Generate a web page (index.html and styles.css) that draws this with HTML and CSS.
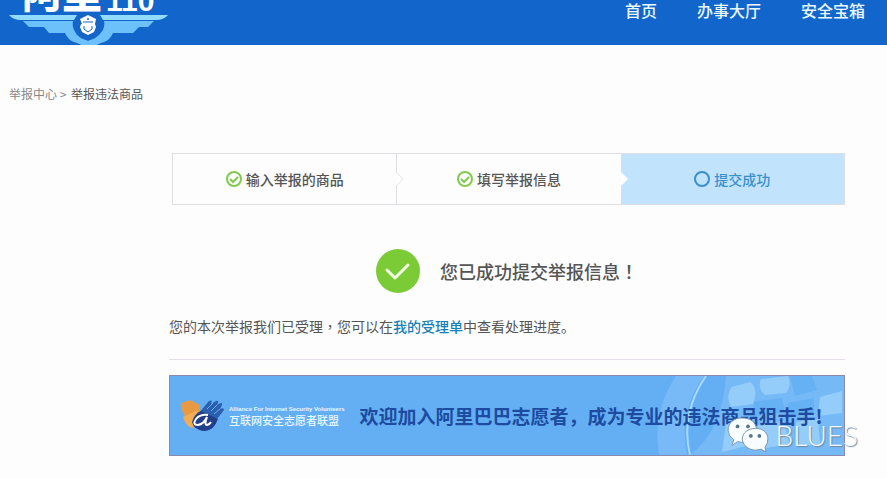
FILE: index.html
```html
<!DOCTYPE html>
<html lang="zh-CN">
<head>
    <meta charset="utf-8" />
    <title>举报违法商品</title>
    <link rel="stylesheet" href="styles.css">
</head>
<body>
    <header class="header">
        <a href="#" class="logo">
            <span class="logo-text">阿里<b>110</b></span>
            <svg class="logo-wings" viewBox="0 0 160 30" width="160" height="30">
                <path fill="#8fdcff" d="M0 0h68l-3 5H12Q4 5 0 0zM159 0H91l3 5h53q8 0 12-5z"/>
                <path fill="#6cc1fb" d="M14 6h50q-1 5 1 9l3 5 11 6 11-6 4-5q2-5 1-9h50l-6 6h-9l-6 6h-20q-3 7-9 9-8 2-15 9-7-7-15-9-6-2-9-9H40l-5-6H20z"/>
                <circle cx="79" cy="12" r="13" fill="#1464ca"/>
                <path fill="#fff" d="M71 4l8-4 8 4-1 5H73z"/>
                <path fill="#fff" d="M72 9h14l1 3-2 5-6 3-6-3-2-5z"/>
                <path d="M74 7h10M75 11v3l4 3 4-3v-3" fill="none" stroke="#1464ca"/>
                <circle cx="79" cy="4" r="1" fill="#1464ca"/>
            </svg>
        </a>
        <nav class="nav">
            <a href="#">首页</a>
            <a href="#">办事大厅</a>
            <a href="#">安全宝箱</a>
        </nav>
    </header>

    <div class="breadcrumb"><a href="#">举报中心</a> &gt; <span>举报违法商品</span></div>

    <main class="content">
        <ol class="steps">
            <li class="step">
                <svg viewBox="0 0 16 16" width="16" height="16" fill="none" stroke="#83c94f" stroke-width="2"><circle cx="8" cy="8" r="7"/><path d="M4 8l3 3 5-5"/></svg>
                输入举报的商品
                <svg class="arrow" viewBox="0 0 8 16" width="8" height="16"><path fill="#fff" stroke="#e3e3e8" d="M0 1l7 7-7 7"/></svg>
            </li>
            <li class="step">
                <svg viewBox="0 0 16 16" width="16" height="16" fill="none" stroke="#83c94f" stroke-width="2"><circle cx="8" cy="8" r="7"/><path d="M4 8l3 3 5-5"/></svg>
                填写举报信息
                <svg class="arrow" viewBox="0 0 8 16" width="8" height="16"><path fill="#fff" d="M0 1l7 7-7 7"/></svg>
            </li>
            <li class="step active">
                <svg viewBox="0 0 16 16" width="16" height="16" fill="none" stroke="#3990cd" stroke-width="2"><circle cx="8" cy="8" r="7"/></svg>
                提交成功
            </li>
        </ol>

        <div class="result">
            <svg viewBox="0 0 44 44" width="44" height="44"><circle cx="22" cy="22" r="22" fill="#7acb36"/><path d="M11 21l8 8 13-13" fill="none" stroke="#f3ffe5" stroke-width="3" stroke-linecap="round" stroke-linejoin="round"/></svg>
            <h1>您已成功提交举报信息<span class="mark" lang="zh-TW">！</span></h1>
        </div>
        <p class="message">您的本次举报我们已受理<span class="mark" lang="zh-TW">，</span>您可以在<a href="#">我的受理单</a>中查看处理进度。</p>

        <div class="banner">
            <svg class="banner-bg" viewBox="0 0 190 79" width="190" height="79">
                <path fill="#8bc6fa" opacity=".5" d="M22 0Q-2 35 5 79h28Q24 36 50 0z"/>
                <path fill="#8bc6fa" opacity=".45" d="M72 0h118v79H36Q68 56 72 0z"/>
                <path fill="none" stroke="#a8dafc" stroke-width="2" d="M52 0Q26 38 36 79"/>
                <path fill="#a2d6fb" opacity=".7" d="M78 11l18-5q9 6 3 22l-22 3q-6-11 1-20zM107 3l27-3q4 9-2 17l-21 2q-8-7-4-16zM166 21l22-6v22l-24 3zM72 48l24-4-4 26-24 6zM104 49l26-4 5 23-29 5zM142 46l22-3 2 25-25 2z"/>
                <path fill="#5baaf1" opacity=".6" d="M136 0h22l5 14-22 6zM100 26l28-4 3 14-32 5zM134 27l26-5v16l-25 4z"/>
            </svg>
            <svg class="banner-logo" viewBox="0 0 46 32" width="46" height="32">
                <path fill="#e79a43" d="M1 7Q0 2 5 2q6-4 10 1 6 0 5 7l-4 18Q3 18 1 7z"/>
                <path fill="#f2ad54" d="M3 17l15-7-5 18Q6 27 3 17z"/>
                <path fill="#2a60ae" d="M18 14L29 1q4-2 2 3l5-3q4-1 1 4 6-4 5 0l-2 4q4-2 4 1l-7 9q-2 12-14 12-12-3-5-17z"/>
                <path fill="#223f8c" d="M12 22q2-8 9-11l17 8q-4 11-14 12-10-1-12-9z"/>
                <path d="M27 9l6-6M31 11l6-6M34 14l6-5" stroke="#68aff4" fill="none"/>
                <path d="M28 15q-8-1-12 4-4 6 2 6 6-1 9-8-3 8 0 8 3-1 4-3" stroke="#fff" stroke-width="2" fill="none"/>
            </svg>
            <div class="league">
                <span class="league-en">Alliance For Internet Security Volunteers</span>
                <span class="league-cn">互联网安全志愿者联盟</span>
            </div>
            <strong class="slogan">欢迎加入阿里巴巴志愿者，成为专业的违法商品狙击手!</strong>
            <div class="watermark">
                <svg viewBox="0 0 44 38" width="42" height="36">
                    <path fill="#f8fdff" stroke="#7894aa" d="M16 1C7 1 1 6 1 14q0 6 6 10l-2 6 6-4q7 2 13 0 7-4 7-12C31 6 25 1 16 1z"/>
                    <path fill="#f8fdff" stroke="#7894aa" d="M30 12c-8 0-14 5-14 11s6 12 14 12l6-1 5 3-1-5q3-4 3-9c0-6-5-11-13-11z"/>
                    <g fill="#5c748b"><circle cx="11" cy="10" r="2"/><circle cx="22" cy="10" r="2"/><circle cx="25" cy="20" r="2"/><circle cx="34" cy="20" r="2"/></g>
                </svg>
                <span>BLUES</span>
            </div>
        </div>
    </main>
</body>
</html>
```
FILE: styles.css
```css
*{
    padding:0;
    margin:0;
    box-sizing:border-box;
}
body{
    background:#fdfdfe;
    color:#555;
    font-family:"Noto Sans CJK SC", sans-serif;
    font-size:14px;
    line-height:20px;
}
a{
    text-decoration:none;
    color:inherit;
}
svg{
    display:block;
    flex:none;
}
.header{
    display:flex;
    justify-content:space-between;
    background:#1266cb;
    padding:0 22px 0 9px;
}
.logo{
    color:#fff;
}
.logo-text{
    display:flex;
    align-items:flex-end;
    gap:4px;
    height:15px;
    padding-left:13px;
    overflow:hidden;
    font-size:40px;
    line-height:48px;
    font-weight:900;
}
.logo-text b{
    font:bold 30px/28px "Liberation Sans", sans-serif;
}
.nav{
    display:flex;
    gap:40px;
    color:#e9f8ff;
    font-size:16px;
    font-weight:500;
}
.breadcrumb{
    padding:39px 9px 0;
    font-size:12px;
    color:#888;
}
.breadcrumb span{
    margin-left:2px;
    color:#555;
}
.content{
    padding:49px 42px 22px 169px;
}
.steps{
    display:flex;
    margin-left:3px;
    border:1px solid #dedee3;
    list-style:none;
}
.step{
    position:relative;
    display:flex;
    flex:1;
    align-items:center;
    justify-content:center;
    gap:4px;
    height:50px;
    font-weight:500;
}
.step:first-child{
    border-right:1px solid #dedee3;
}
.step.active{
    background:#c2e3fc;
    color:#3990cd;
}
.arrow{
    position:absolute;
    left:100%;
    top:17px;
    z-index:1;
}
.mark{
    font-family:"Noto Sans CJK TC", sans-serif;
}
.result{
    display:flex;
    align-items:center;
    justify-content:center;
    gap:20px;
    margin-top:44px;
}
.result h1{
    font-size:18px;
    line-height:24px;
    font-weight:500;
}
.message{
    padding:23px 0;
    border-bottom:1px solid #e6deea;
}
.message a{
    color:#1681b5;
    font-weight:500;
}
.banner{
    position:relative;
    display:flex;
    align-items:center;
    height:81px;
    margin-top:15px;
    padding-left:10px;
    border:1px solid #8b8aae;
    background:#64aff4;
    white-space:nowrap;
}
.banner-bg{
    position:absolute;
    right:0;
    top:0;
}
.league{
    display:flex;
    flex-direction:column;
    margin:0 15px 0 3px;
    color:#e6f7ff;
}
.league-en{
    font:bold 6px/8px "Liberation Sans", sans-serif;
}
.league-cn{
    font-size:11px;
    line-height:14px;
    font-weight:500;
}
.slogan{
    position:relative;
    color:#1c4ba0;
    font-size:19px;
    line-height:28px;
    font-weight:700;
}
.watermark{
    position:absolute;
    right:-14px;
    bottom:2px;
    display:flex;
    align-items:center;
    gap:6px;
    color:#f4faff;
    font:300 28px/34px Lato, sans-serif;
    text-shadow:1px 1px 1px #6d8499;
}
```
